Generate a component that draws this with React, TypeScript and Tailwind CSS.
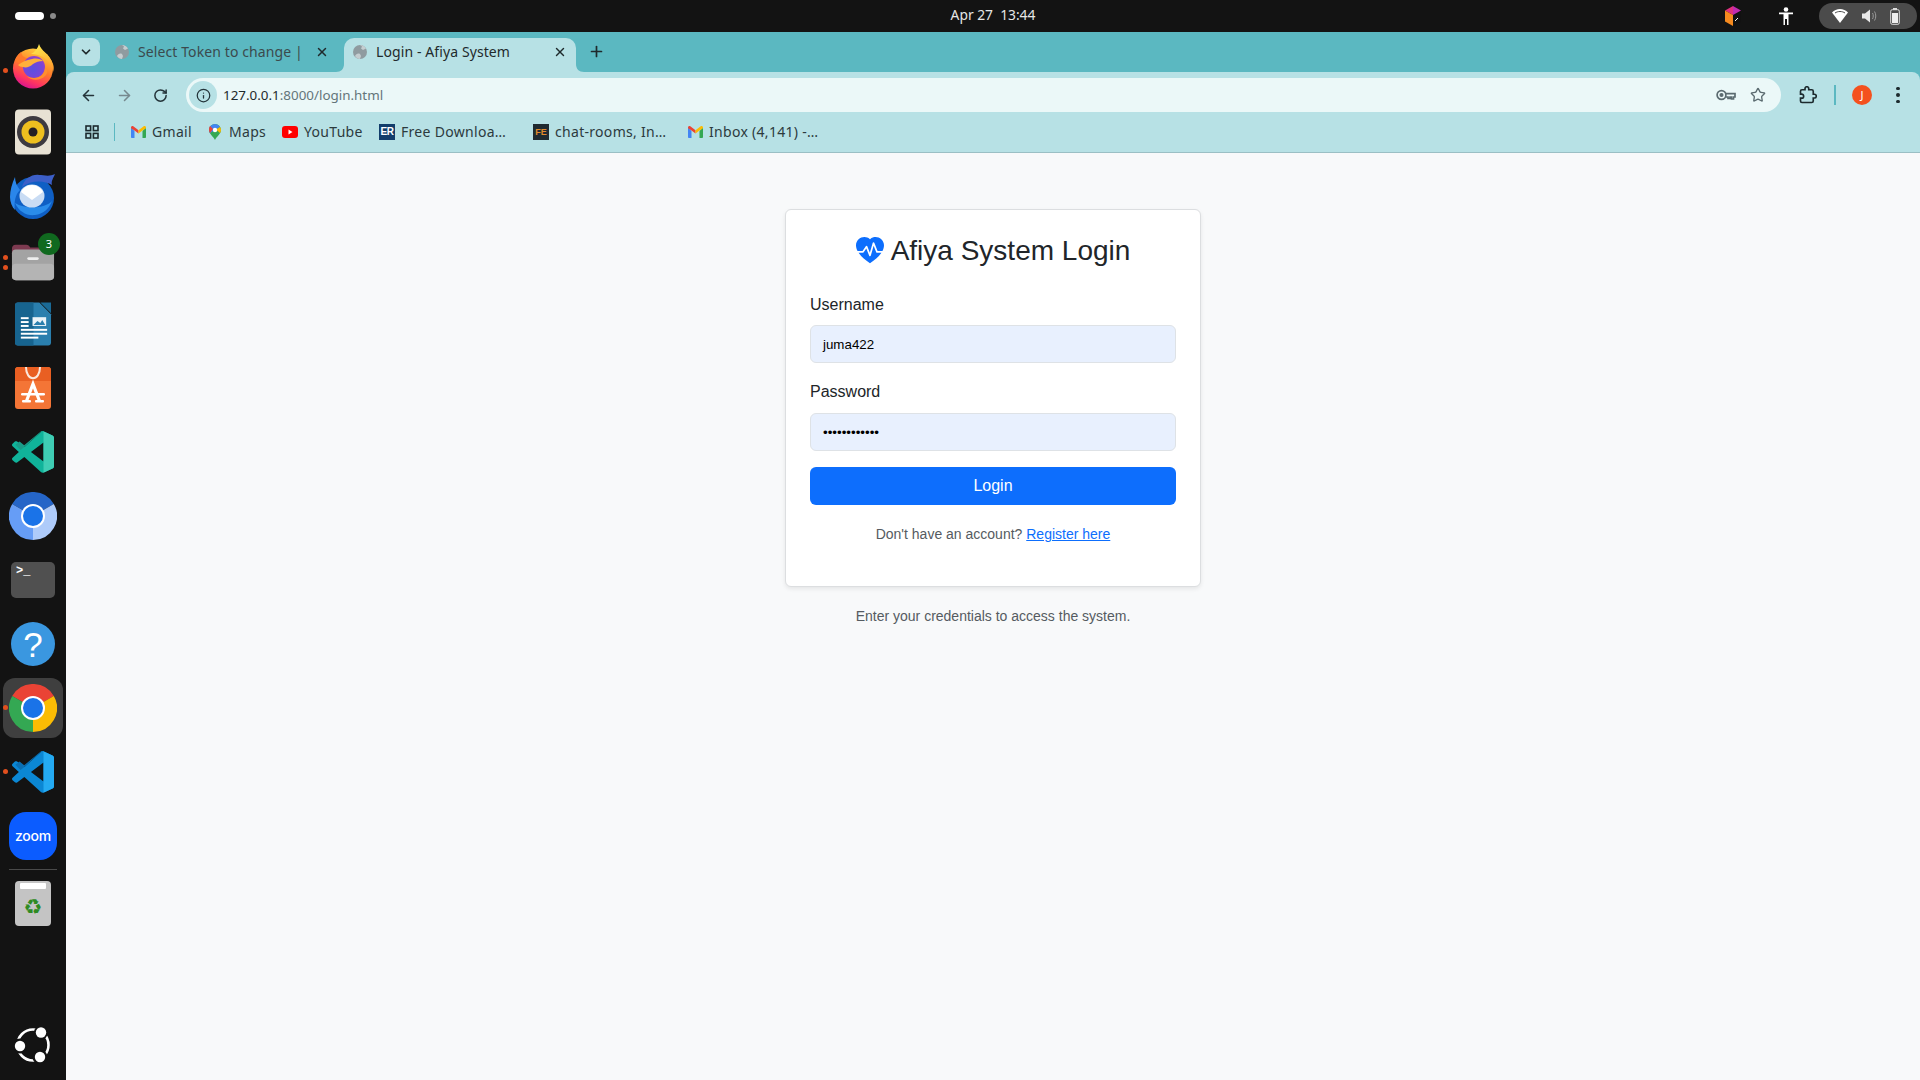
import React from "react";
import { ArrowLeft, ArrowRight, RotateCw, X, Plus, ChevronDown, Info, Star } from "lucide-react";
import { BsHeartPulseFill } from "react-icons/bs";

const uiFont = "font-['Noto_Sans','Open_Sans',sans-serif]";

function Dots({ ys }: { ys: number[] }) {
  return (
    <>
      {ys.map((y) => (
        <span key={y} className="absolute left-[3px] h-[5px] w-[5px] rounded-full bg-[#e2501e]" style={{ top: y }} />
      ))}
    </>
  );
}

function Firefox() {
  return (
    <svg width="42" height="46" viewBox="0 0 42 46" className="-mt-[4px]">
      <defs>
        <linearGradient id="ffa" x1="0.75" y1="0.1" x2="0.35" y2="1">
          <stop offset="0" stopColor="#ffc83a" />
          <stop offset="0.45" stopColor="#ff7b2a" />
          <stop offset="0.78" stopColor="#ff3560" />
          <stop offset="1" stopColor="#d8148f" />
        </linearGradient>
        <linearGradient id="ffc" x1="0.3" y1="0" x2="0.8" y2="1">
          <stop offset="0" stopColor="#ffe94f" />
          <stop offset="1" stopColor="#ff9a2a" />
        </linearGradient>
        <radialGradient id="ffb" cx="0.45" cy="0.6" r="0.65">
          <stop offset="0" stopColor="#5b50e0" />
          <stop offset="0.7" stopColor="#7a45d8" />
          <stop offset="1" stopColor="#a83fc0" />
        </radialGradient>
      </defs>
      <circle cx="21" cy="25.5" r="20" fill="url(#ffa)" />
      <path d="M27 1c2 7 11 11 14 20 1 3 1 5 0 8-1-9-7-15-15-17-3-1-5-1-7-1 4-2 7-6 8-10z" fill="url(#ffc)" />
      <path d="M9 9c1 4 3 6 8 6l-7 8-7-6c1-3 3-6 6-8z" fill="#ff7a2a" />
      <circle cx="22" cy="24" r="11" fill="url(#ffb)" />
      <path d="M6 22c4-3 8-5 14-6 5-1 9 0 11 2-4 0-7 1-10 3-3 3-7 4-10 3-2 0-4-1-5-2z" fill="#ffb03a" />
      <path d="M33 24c0 7-5 11-11 11-3 0-5-1-7-2 4 5 13 5 18 0 3-3 3-6 0-9z" fill="#ff8f2e" />
    </svg>
  );
}

function Rhythmbox() {
  return (
    <svg width="36" height="46" viewBox="0 0 36 46">
      <rect x="0" y="0.5" width="36" height="45" rx="4" fill="#e8e2d4" />
      <circle cx="18" cy="23" r="16" fill="#3d3a40" />
      <circle cx="18" cy="23" r="11.5" fill="#eebf1f" />
      <circle cx="18" cy="23" r="4.5" fill="#241f24" />
    </svg>
  );
}

function Thunderbird() {
  return (
    <svg width="48" height="46" viewBox="0 0 48 46">
      <circle cx="24" cy="25" r="21" fill="#0f5fc4" />
      <path d="M6 4c-3 7-5 13-5 20 0 5 2 10 5 13-1-8 0-15 5-20-3-4-5-8-5-13z" fill="#2a86ea" />
      <path d="M13 14C15 6 23 1 30 2c5 0 10 2 16-1-2 5-4 7-3 11-8-5-21-5-30 2z" fill="#3c5fc8" />
      <path d="M6 30c4 9 12 13 20 12 8-1 14-6 17-14-6 7-26 9-37 2z" fill="#2a8cea" />
      <ellipse cx="23" cy="23" rx="12.5" ry="11.5" fill="#c9dcf4" />
      <path d="M12 19l11 8 11-8c-2-4-6-7-11-7s-9 3-11 7z" fill="#ffffff" />
    </svg>
  );
}

function Files() {
  return (
    <svg width="44" height="42" viewBox="0 0 46 42">
      <path d="M1 8c0-2 1-4 4-4h11c2 0 3 1 4 3h20c3 0 5 2 5 4v6H1z" fill="#7d3a50" />
      <rect x="1" y="9" width="44" height="32" rx="4" fill="#a3a3a3" />
      <rect x="1" y="24" width="44" height="17" rx="4" fill="#b4b4b4" />
      <rect x="17" y="17" width="12" height="3" rx="1.5" fill="#eeeeee" />
    </svg>
  );
}

function Writer() {
  return (
    <svg width="37" height="46" viewBox="0 0 38 46">
      <path d="M3 1h22l12 12v29c0 2-1 3-3 3H3c-2 0-3-1-3-3V4c0-2 1-3 3-3z" fill="#2a7fae" />
      <path d="M26 1l11 0v11z" fill="#1a6a96" />
      <path d="M0 4c0-2 1-3 3-3h16v44H3c-2 0-3-1-3-3z" fill="#17648f" />
      <rect x="18" y="16" width="14" height="9" fill="#eaf3f8" />
      <path d="M19 24l4-4 3 2 2-3 3 5z" fill="#2a7fae" />
      <rect x="6" y="16" width="8" height="2" fill="#fff" />
      <rect x="6" y="20" width="8" height="2" fill="#fff" />
      <rect x="6" y="24" width="8" height="2" fill="#fff" />
      <rect x="6" y="28" width="27" height="2" fill="#fff" />
      <rect x="6" y="32" width="27" height="2" fill="#fff" />
      <rect x="6" y="36" width="18" height="2" fill="#fff" />
    </svg>
  );
}

function AppCenter() {
  return (
    <svg width="36" height="42" viewBox="0 0 36 42">
      <path d="M3 0h30c1.5 0 3 1 3 3v36c0 2-1 3-3 3H3c-2 0-3-1-3-3V3c0-2 1.5-3 3-3z" fill="#f47536" />
      <path d="M3 0h30c1.5 0 3 1 3 3v11H0V3c0-2 1.5-3 3-3z" fill="#e95f22" />
      <path d="M11 0c0 15 14 15 14 0" fill="none" stroke="#fbe8dc" strokeWidth="2" />
      <path d="M11.5 34 18 17l6.5 17" fill="none" stroke="#fff" strokeWidth="3.2" />
      <rect x="6" y="26" width="24" height="2.4" rx="1.2" fill="#fff" />
      <rect x="7" y="33" width="9" height="2.4" rx="1" fill="#fff" />
      <rect x="20" y="33" width="9" height="2.4" rx="1" fill="#fff" />
    </svg>
  );
}

function VSC({ dark, light, mid }: { dark: string; light: string; mid: string }) {
  return (
    <svg width="42" height="42" viewBox="0 0 100 100">
      <path d="M96.5 10.8 75.9.9c-2.4-1.2-5.2-.7-7.1 1.2L29.4 38 12.2 25c-1.6-1.2-3.8-1.1-5.3.2L1.4 30.3c-1.8 1.7-1.8 4.5 0 6.2L16.3 50 1.4 63.5c-1.8 1.7-1.8 4.5 0 6.2l5.5 5c1.5 1.3 3.7 1.4 5.3.2l17.2-13 39.4 35.9c1.9 1.9 4.7 2.4 7.1 1.2l20.6-9.9c2.2-1 3.5-3.1 3.5-5.5V16.3c0-2.4-1.3-4.5-3.5-5.5zM75 72.7 45.1 50 75 27.3v45.4z" fill={mid} />
      <path d="M75 0 68.8 2.1 29.4 38l-9 7L8 33l10-8 11 9L70 0z" fill={dark} />
      <path d="M75 .2c.3.2.6.4.9.7l20.6 9.9c2.2 1 3.5 3.1 3.5 5.5v67.4c0 2.4-1.3 4.5-3.5 5.5L75.9 99c-.3.2-.6.4-.9.5z" fill={light} />
    </svg>
  );
}

function ChromeLogo({ a, b, c, core, ring }: { a: string; b: string; c: string; core: string; ring: string }) {
  return (
    <svg width="48" height="48" viewBox="0 0 48 48">
      <path d="M24 24 3.2 12A24 24 0 0 1 44.8 12z" fill={a} />
      <path d="M24 24 44.8 12A24 24 0 0 1 24 48z" fill={b} />
      <path d="M24 24 24 48A24 24 0 0 1 3.2 12z" fill={c} />
      <circle cx="24" cy="24" r="12" fill={ring} />
      <circle cx="24" cy="24" r="10" fill={core} />
    </svg>
  );
}

function Ubuntu() {
  return (
    <svg width="38" height="38" viewBox="0 0 38 38">
      <circle cx="19" cy="19" r="15.5" fill="none" stroke="#fff" strokeWidth="2.6" />
      <circle cx="27" cy="6.5" r="7" fill="#131313" />
      <circle cx="6" cy="20" r="7.5" fill="#131313" />
      <circle cx="26" cy="31" r="7.5" fill="#131313" />
      <circle cx="27" cy="6.5" r="5.2" fill="#fff" />
      <circle cx="6" cy="20" r="5.2" fill="#fff" />
      <circle cx="26" cy="31" r="5.2" fill="#fff" />
    </svg>
  );
}

function Slot({ children, className = "" }: { children: React.ReactNode; className?: string }) {
  return <div className={"relative flex h-16 w-full shrink-0 items-center justify-center " + className}>{children}</div>;
}

function Dock() {
  return (
    <div className="flex w-[66px] shrink-0 flex-col bg-[#131313] pt-[4px] pb-[3px]">
      <Slot>
        <Dots ys={[32]} />
        <Firefox />
      </Slot>
      <Slot>
        <Rhythmbox />
      </Slot>
      <Slot>
        <Thunderbird />
      </Slot>
      <Slot>
        <Dots ys={[27, 37]} />
        <div className="mt-[1px]">
          <Files />
        </div>
        <span className="absolute left-[38px] top-[5px] flex h-[22px] w-[22px] items-center justify-center rounded-full bg-[#10691f] font-['Noto_Sans',sans-serif] text-[11px] text-white">
          3
        </span>
      </Slot>
      <Slot>
        <Writer />
      </Slot>
      <Slot>
        <AppCenter />
      </Slot>
      <Slot>
        <VSC dark="#1a9c88" light="#3fcdb4" mid="#10b39a" />
      </Slot>
      <Slot>
        <ChromeLogo a="#2565c7" b="#aecbfa" c="#669df6" core="#1a73e8" ring="#ffffff" />
      </Slot>
      <Slot>
        <div className="h-[36px] w-[44px] rounded-[5px] bg-[#505050] pl-[5px] font-['Liberation_Mono',monospace] text-[12px] leading-[18px] font-bold text-white">
          &gt;_
        </div>
      </Slot>
      <Slot>
        <div className="flex h-[44px] w-[44px] items-center justify-center rounded-full bg-[#3a97e0] font-['Liberation_Sans',sans-serif] text-[35px] leading-none text-white">
          ?
        </div>
      </Slot>
      <Slot>
        <div className="flex h-[60px] w-[60px] items-center justify-center rounded-[12px] bg-[#3f3f3f]">
          <ChromeLogo a="#ea4335" b="#fbbc04" c="#34a853" core="#1a73e8" ring="#ffffff" />
        </div>
        <Dots ys={[29]} />
      </Slot>
      <Slot>
        <Dots ys={[29]} />
        <VSC dark="#0a6fb4" light="#24aaf2" mid="#0b87d4" />
      </Slot>
      <Slot>
        <div className="flex h-[48px] w-[48px] items-center justify-center rounded-[17px] bg-[#0b5cff] pb-[2px] font-['Inter',sans-serif] text-[14px] font-medium tracking-[-0.2px] text-white">
          zoom
        </div>
      </Slot>
      <div className="mx-[9px] mt-[1px] h-px shrink-0 bg-[#4a4a4a]" />
      <Slot className="mt-[1px]">
        <div className="relative flex h-[45px] w-[36px] items-center justify-center rounded-[4px] bg-[#c4c4c4]">
          <span className="absolute left-[5px] right-[5px] top-[2px] h-[6px] rounded-[1px] bg-white" />
          <span className="mt-[9px] font-['DejaVu_Sans',sans-serif] text-[21px] leading-none text-[#2e8b22]">♻</span>
        </div>
      </Slot>
      <Slot className="mt-auto">
        <Ubuntu />
      </Slot>
    </div>
  );
}

function Globe() {
  return (
    <svg width="14" height="14" viewBox="0 0 14 14" className="shrink-0">
      <circle cx="7" cy="7" r="7" fill="#8f9ba0" />
      <path d="M7 0a7 7 0 0 1 6 3.5L10 5 8 3.5 9 1.5zM2 11c1-2 3-3 5-2l1 2-1 3c-2 0-4-1-5-3z" fill="#c4cdd0" />
    </svg>
  );
}

function Tabs() {
  return (
    <div className={"flex h-10 items-end pl-[6px] " + uiFont}>
      <div className="mb-[6px] flex h-7 w-7 items-center justify-center rounded-lg bg-[#b7e1e5] text-[#1f2a2c]">
        <ChevronDown size={14} strokeWidth={3} />
      </div>
      <div className="flex h-[34px] w-[244px] items-center pb-[7px] pl-[15px] pr-[15px] text-[14px] tracking-[0.1px] text-[#3b4a4d]">
        <Globe />
        <span className="ml-[9px] whitespace-nowrap">Select Token to change |</span>
        <X size={14} strokeWidth={2.5} className="ml-auto shrink-0 text-[#1f2a2c]" />
      </div>
      <div className="relative flex h-[34px] w-[232px] items-center rounded-t-[10px] bg-[#b7e1e5] pb-[7px] pl-[9px] pr-[9px] text-[14px] tracking-[0.1px] text-[#1f2a2c]">
        <svg className="absolute bottom-0 -left-2" width="8" height="8" viewBox="0 0 8 8">
          <path d="M8 0v8H0c5 0 8-3 8-8z" fill="#b7e1e5" />
        </svg>
        <svg className="absolute bottom-0 -right-2" width="8" height="8" viewBox="0 0 8 8">
          <path d="M0 0v8h8C3 8 0 5 0 0z" fill="#b7e1e5" />
        </svg>
        <Globe />
        <span className="ml-[9px] whitespace-nowrap">Login - Afiya System</span>
        <X size={14} strokeWidth={2.5} className="ml-auto shrink-0" />
      </div>
      <div className="mb-[5px] ml-[11px] flex h-8 w-[18px] items-center justify-center text-[#1f2a2c]">
        <Plus size={17} strokeWidth={2.4} />
      </div>
    </div>
  );
}

function Toolbar() {
  return (
    <div className={"flex h-10 items-start rounded-t-lg bg-[#b7e1e5] pt-[6px] pl-[6px] pr-[6px] " + uiFont}>
      <div className="flex h-[34px] w-8 items-center justify-center text-[#24343a]">
        <ArrowLeft size={17} strokeWidth={2.2} />
      </div>
      <div className="ml-1 flex h-[34px] w-8 items-center justify-center text-[#76898e]">
        <ArrowRight size={17} strokeWidth={2.2} />
      </div>
      <div className="ml-1 flex h-[34px] w-8 items-center justify-center text-[#24343a]">
        <RotateCw size={15} strokeWidth={2.4} />
      </div>
      <div className="ml-[10px] flex h-[34px] flex-1 items-center rounded-full bg-[#ebf8f8] pl-[3px] text-[13.4px]">
        <div className="flex h-7 w-7 items-center justify-center rounded-full bg-[#b7e1e5] text-[#24343a]">
          <Info size={15} strokeWidth={2} />
        </div>
        <span className="ml-[6px] whitespace-nowrap text-[#1f2a2c]">
          127.0.0.1<span className="text-[#64757a]">:8000/login.html</span>
        </span>
        <div className="ml-auto flex items-center pr-[15px]">
          <svg width="20" height="12" viewBox="0 0 20 12" fill="none" stroke="#5b6b70" strokeWidth="1.7">
            <circle cx="5.5" cy="6" r="4.4" />
            <circle cx="5.5" cy="6" r="1.2" fill="#5b6b70" />
            <path d="M10 4.6h9v3.4h-1.5v2h-2v-2h-1.5v1.4h-2v-1.4H10" />
          </svg>
          <Star size={16} strokeWidth={2} className="ml-[14px] text-[#5b6b70]" />
        </div>
      </div>
      <div className="ml-[11px] flex h-[34px] w-8 items-center justify-center">
        <svg width="18" height="18" viewBox="0 0 24 24" fill="none" stroke="#1c2a2e" strokeWidth="2.2">
          <path d="M20.5 11H19V7c0-1.1-.9-2-2-2h-4V3.5C13 2.12 11.88 1 10.5 1S8 2.12 8 3.5V5H4c-1.1 0-1.99.9-1.99 2v3.8H3.5c1.49 0 2.7 1.21 2.7 2.7s-1.21 2.7-2.7 2.7H2V20c0 1.1.9 2 2 2h13c1.1 0 2-.9 2-2v-4h1.5c1.38 0 2.5-1.12 2.5-2.5S21.88 11 20.5 11z" />
        </svg>
      </div>
      <div className="ml-[10px] mt-[7px] h-5 w-[2px] bg-[#5bb8c1]" />
      <div className="ml-4 mt-[7px] flex h-5 w-5 items-center justify-center rounded-full bg-[#f4511e] text-[11px] text-white">J</div>
      <div className="ml-[10px] flex h-[34px] w-8 flex-col items-center justify-center gap-[3px]">
        <span className="h-[3.5px] w-[3.5px] rounded-full bg-[#1c2a2e]" />
        <span className="h-[3.5px] w-[3.5px] rounded-full bg-[#1c2a2e]" />
        <span className="h-[3.5px] w-[3.5px] rounded-full bg-[#1c2a2e]" />
      </div>
    </div>
  );
}

function GmailIcon() {
  return (
    <svg width="15" height="12" viewBox="0 0 15 12">
      <path d="M0 1.5V11c0 .5.4 1 1 1h2.5V5z" fill="#4285f4" />
      <path d="M15 1.5V11c0 .5-.4 1-1 1h-2.5V5z" fill="#34a853" />
      <path d="M0 1.5C0 .3 1.3-.4 2.3.3L7.5 4.3 7.5 7.4 3.5 4.6 0 2.2z" fill="#ea4335" />
      <path d="M15 1.5c0-1.2-1.3-1.9-2.3-1.2L7.5 4.3V7.4l4-2.8L15 2.2z" fill="#fbbc04" />
    </svg>
  );
}

function BookmarkItem({ icon, label, width }: { icon: React.ReactNode; label: string; width: number }) {
  return (
    <div className="flex shrink-0 items-center" style={{ width }}>
      <span className="flex w-[16px] shrink-0 items-center justify-center">{icon}</span>
      <span className="relative -top-px ml-[6px] whitespace-nowrap">{label}</span>
    </div>
  );
}

function Bookmarks() {
  return (
    <div className={"flex h-[41px] items-center border-b border-[#9bbfc4] bg-[#b7e1e5] pl-[19px] text-[14px] tracking-[0.3px] text-[#2c3a3d] " + uiFont}>
      <svg width="14" height="14" viewBox="0 0 14 14" fill="none" stroke="#1c2a2e" strokeWidth="1.6">
        <rect x="1" y="1" width="4.6" height="4.6" />
        <rect x="8.4" y="1" width="4.6" height="4.6" />
        <rect x="1" y="8.4" width="4.6" height="4.6" />
        <rect x="8.4" y="8.4" width="4.6" height="4.6" />
      </svg>
      <div className="ml-[15px] mr-[15px] h-[18px] w-px bg-[#5bb8c1]" />
      <BookmarkItem width={77} label="Gmail" icon={<GmailIcon />} />
      <BookmarkItem
        width={75}
        label="Maps"
        icon={
          <svg width="12" height="16" viewBox="0 0 12 16">
            <path d="M6 0a6 6 0 0 1 6 6c0 4-4 6-6 10C4 12 0 10 0 6a6 6 0 0 1 6-6z" fill="#34a853" />
            <path d="M6 0a6 6 0 0 1 5 3L1 9C.4 8 0 7 0 6a6 6 0 0 1 6-6z" fill="#4285f4" />
            <path d="M1 2l3 3-3 4C.4 8 0 7 0 6c0-1.5.4-3 1-4z" fill="#ea4335" />
            <path d="M12 6c0 1-.4 2-1 3L7 5.5 11 3c.7 1 1 2 1 3z" fill="#fbbc04" />
            <circle cx="6" cy="6" r="2.2" fill="#fff" />
          </svg>
        }
      />
      <BookmarkItem
        width={97}
        label="YouTube"
        icon={
          <svg width="16" height="12" viewBox="0 0 16 12">
            <rect width="16" height="12" rx="3" fill="#ff0000" />
            <path d="M6.5 3.5 10.5 6l-4 2.5z" fill="#fff" />
          </svg>
        }
      />
      <BookmarkItem
        width={154}
        label="Free Downloa…"
        icon={
          <span className="flex h-[16px] w-[16px] items-center justify-center bg-[#123d6b] font-['Liberation_Sans',sans-serif] text-[10px] leading-none font-bold tracking-[-0.5px] text-white">
            ER
          </span>
        }
      />
      <BookmarkItem
        width={154}
        label="chat-rooms, In…"
        icon={
          <span className="flex h-[16px] w-[16px] items-center justify-center bg-[#1f2a30] font-['Liberation_Sans',sans-serif] text-[9px] leading-none font-bold tracking-normal text-[#e08a2c]">
            FE
          </span>
        }
      />
      <BookmarkItem width={130} label="Inbox (4,141) -…" icon={<GmailIcon />} />
    </div>
  );
}

function TopBar() {
  return (
    <div className="flex h-8 shrink-0 items-center bg-[#131313] font-['Noto_Sans',sans-serif]">
      <div className="flex w-[66px] shrink-0 items-center pl-[15px]">
        <span className="h-2 w-[29px] rounded-full bg-white" />
        <span className="ml-[6px] h-[6px] w-[6px] rounded-full bg-[#8a8a8a]" />
      </div>
      <div className="-mt-[2px] flex flex-1 justify-center whitespace-pre text-[13.8px] text-[#e6e6e6]">Apr 27  13:44</div>
      <div className="absolute right-[3px] top-[3px] flex h-[26px] items-center">
        <svg width="16" height="20" viewBox="0 0 16 20">
          <path d="M8 0l8 4.5v11L8 20z" fill="#111" />
          <path d="M8 0l8 4.5L8 9z" fill="#c02bb0" />
          <path d="M8 0 0 4.5 8 9z" fill="#e0307f" />
          <path d="M0 4.5v11L8 20V9z" fill="#f58a1f" />
          <path d="M10 15l3-3" stroke="#fff" />
        </svg>
        <svg className="ml-[38px]" width="14" height="18" viewBox="0 0 14 18" fill="#fff">
          <circle cx="7" cy="2.5" r="2.3" />
          <path d="M0 5.5h14v1.8H9.5V18H8V12H6v6H4.5V7.3H0z" />
        </svg>
        <div className="ml-[26px] flex h-[26px] w-[98px] items-center rounded-full bg-[#4b4b4b] pl-[13px]">
          <svg width="16" height="14" viewBox="0 0 16 14">
            <path d="M8 14 0 3.5C2 1.5 5 0 8 0s6 1.5 8 3.500z" fill="#fff" />
            <path d="M3 4c1.5-1 3-1.5 5-1.5S11.5 3 13 4" stroke="#4b4b4b" strokeWidth="1" fill="none" />
          </svg>
          <svg className="ml-[14px]" width="16" height="16" viewBox="0 0 16 16">
            <path d="M0 5.5h3L8 1.500v13L3 10.500H0z" fill="#e8e8e8" />
            <path d="M10.5 5c1 1.8 1 4.200 0 6M12.5 3.500c1.700 2.500 1.700 6.500 0 9" stroke="#9a9a9a" strokeWidth="1" fill="none" />
          </svg>
          <svg className="ml-[12px]" width="10" height="17" viewBox="0 0 10 17">
            <rect x="3" y="0" width="4" height="2" fill="#ddd" />
            <rect x="0.7" y="1.7" width="8.6" height="14.6" rx="1.5" fill="none" stroke="#ddd" />
            <rect x="2" y="5" width="6" height="10" fill="#eee" />
          </svg>
        </div>
      </div>
    </div>
  );
}

function LoginPage() {
  return (
    <div className="flex-1 bg-[#f8f9fa] pt-[56px] font-['Liberation_Sans',sans-serif]">
      <div className="mx-auto w-[416px]">
        <div className="rounded-md border border-[#dcdee0] bg-white p-6 pb-[41px] shadow-[0_2px_4px_rgba(0,0,0,0.08)]">
          <h2 className="mb-[25px] flex h-[34px] items-center justify-center text-[28px] leading-[34px] text-[#212529]">
            <BsHeartPulseFill className="mr-[7px] text-[#0d6efd]" size={28} />
            Afiya System Login
          </h2>
          <label className="mb-[8px] block text-[16px] leading-6 text-[#212529]">Username</label>
          <div className="mb-[17px] flex h-[38px] items-center rounded-md border border-[#dee2e6] bg-[#e8f0fe] px-3 pt-[1px] text-[13.333px] text-black">juma422</div>
          <label className="mb-[9px] block text-[16px] leading-6 text-[#212529]">Password</label>
          <div className="mb-4 flex h-[38px] items-center rounded-md border border-[#dee2e6] bg-[#e8f0fe] px-3 pt-[1px] text-[13.333px] text-black">
            ••••••••••••
          </div>
          <button className="block h-[38px] w-full rounded-md bg-[#0d6efd] text-[16px] text-white">Login</button>
          <p className="mt-[19px] text-center text-[14px] leading-[21px] text-[#555b61]">
            Don't have an account? <a className="text-[#0d6efd] underline">Register here</a>
          </p>
        </div>
        <p className="mt-[19px] text-center text-[14px] leading-[21px] text-[#555b61]">Enter your credentials to access the system.</p>
      </div>
    </div>
  );
}

export default function App() {
  return (
    <div className="relative flex h-[1080px] w-[1920px] flex-col overflow-hidden">
      <TopBar />
      <div className="flex min-h-0 flex-1">
        <Dock />
        <div className="flex min-w-0 flex-1 flex-col bg-[#5bb8c1]">
          <Tabs />
          <Toolbar />
          <Bookmarks />
          <LoginPage />
        </div>
      </div>
    </div>
  );
}
